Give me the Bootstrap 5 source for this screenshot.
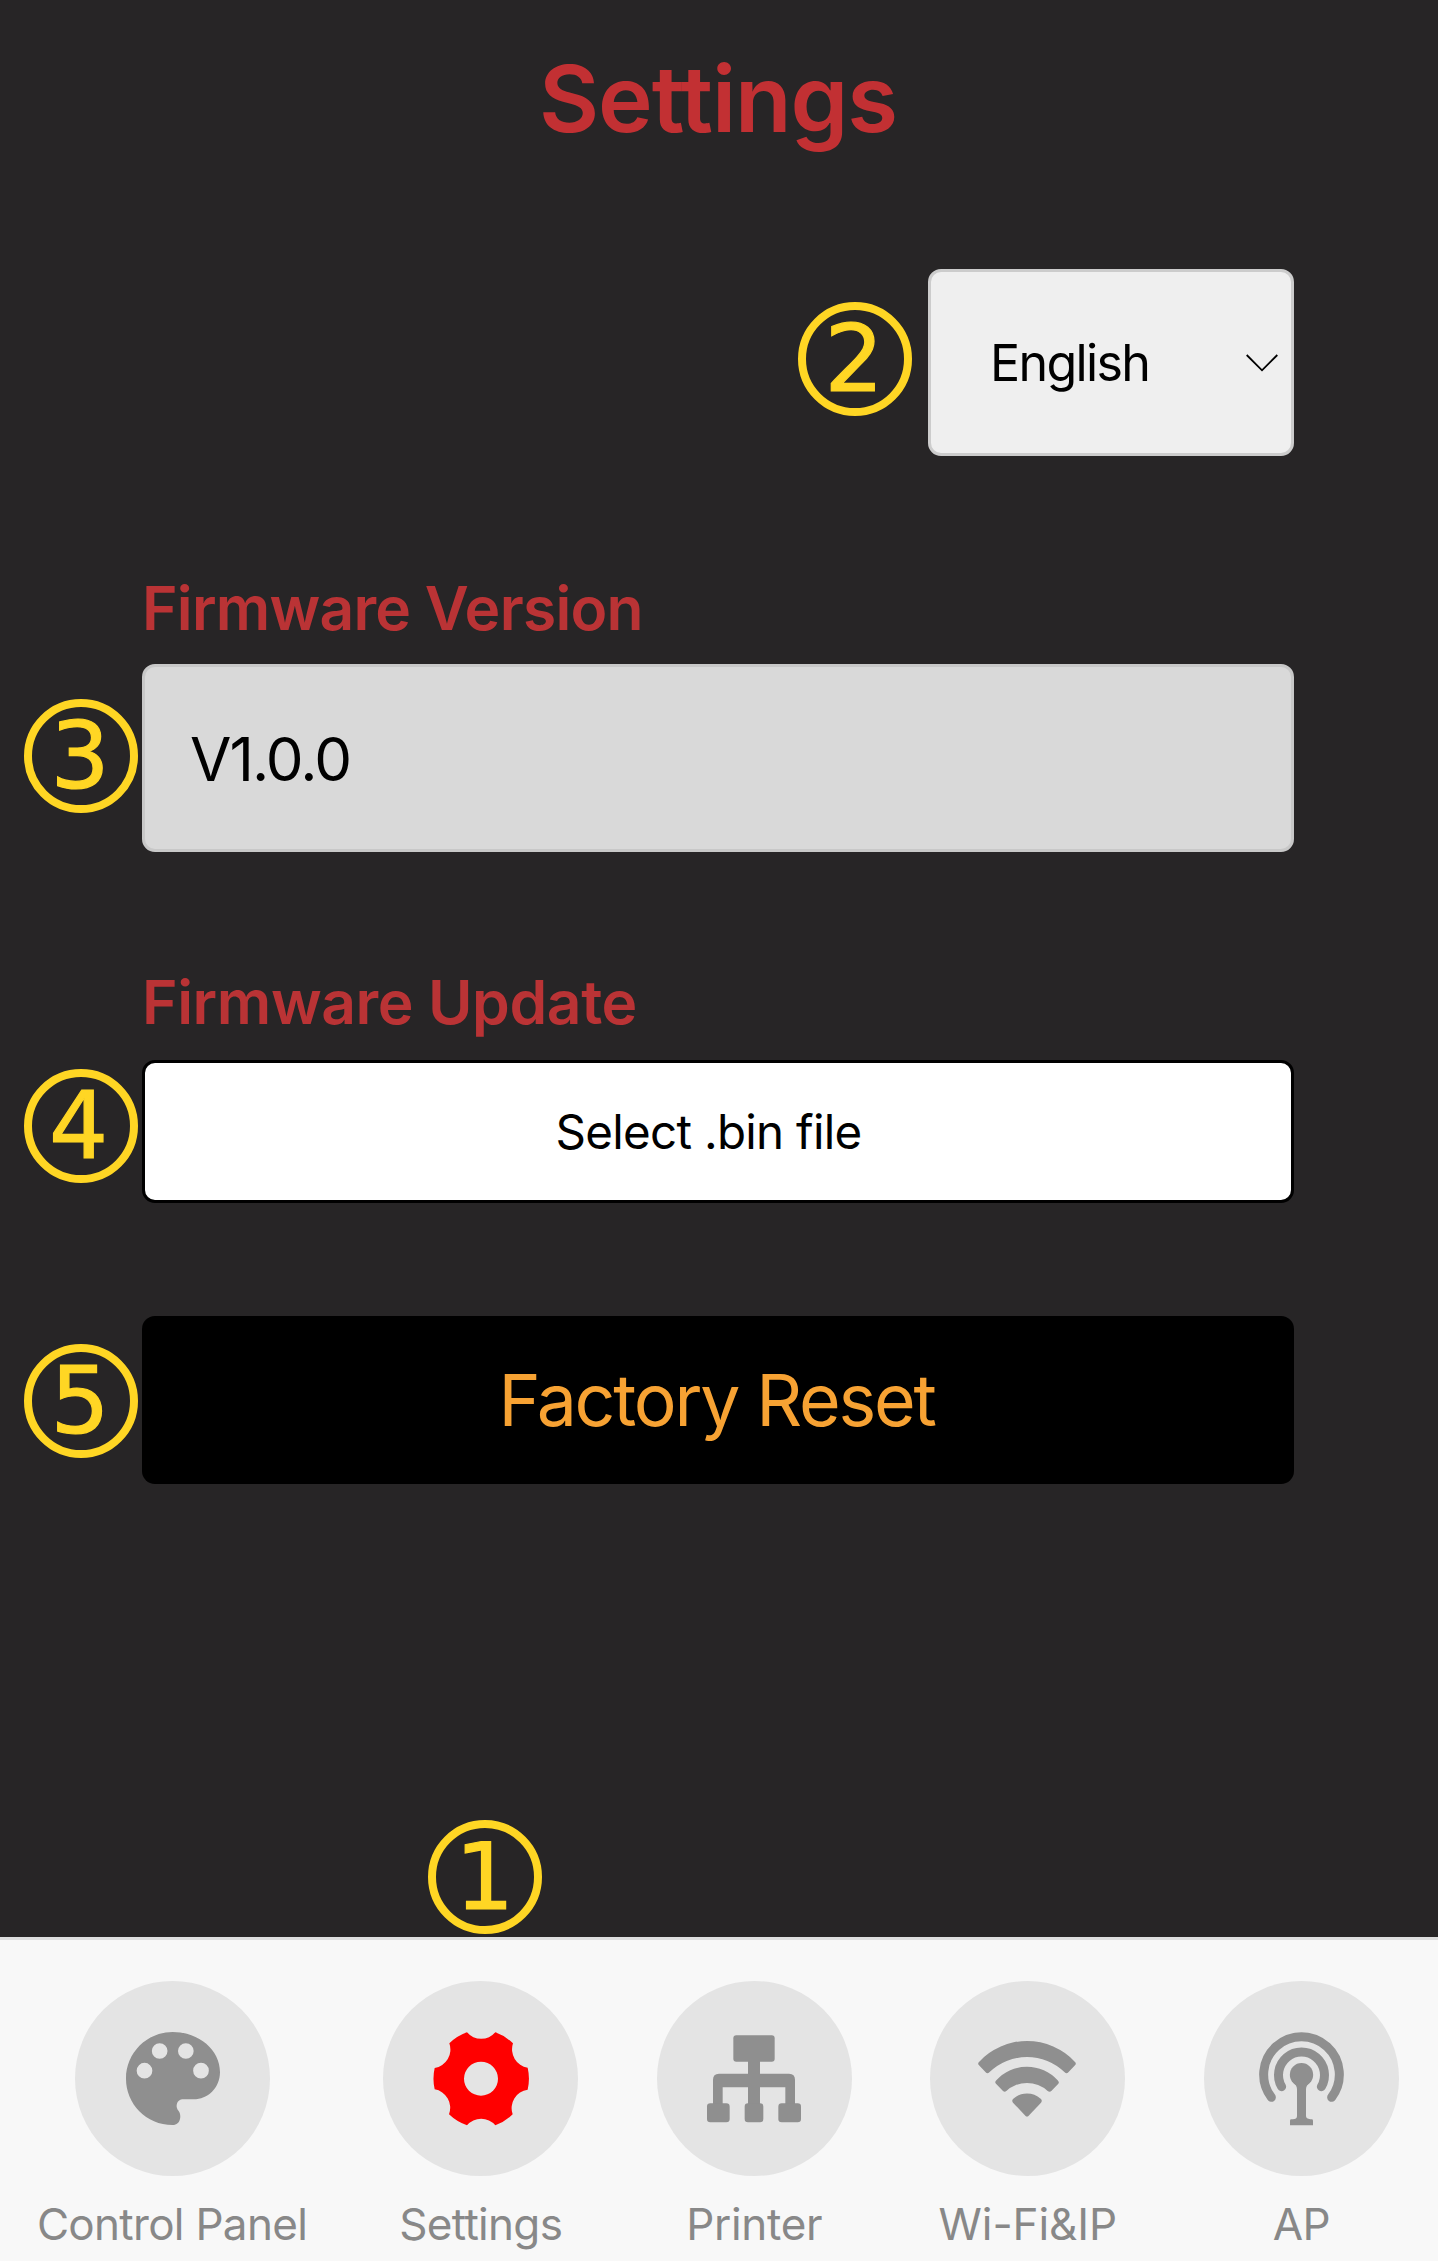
<!DOCTYPE html>
<html lang="en">
<head>
<meta charset="utf-8">
<meta name="viewport" content="width=device-width, initial-scale=1">
<title>Settings</title>
<link href="https://cdn.jsdelivr.net/npm/bootstrap@5.3.0/dist/css/bootstrap.min.css" rel="stylesheet">
<style>
  body { background: #272526; font-family: Inter, "Noto Sans", sans-serif; color: #000; line-height: 1; }
  .screen { height: 2261px; overflow: hidden; }
  .screen-main { padding: 0 144px 0 142px; }
  .page-title { height: 197px; font-size: 92.5px; font-weight: 600; letter-spacing: -1.1px; color: #c23033; }
  .lang-row { margin-top: 72px; }
  .lang-btn { width: 366px; height: 187px; padding: 2px 13px 0 59px; background: #efefef; border: 3px solid #ccc; border-radius: 13px; font-size: 50.2px; letter-spacing: -1.7px; color: #000; }
  .lang-btn svg { margin-top: -2px; }
  .field-label { height: 60px; font-size: 60.5px; font-weight: 600; color: #ba3335; white-space: nowrap; }
  .field-box { border-radius: 13px; border: 3px solid #000; color: #000; }
  .label-version { margin-top: 122px; letter-spacing: -.75px; }
  .version-box { margin-top: 26px; height: 188px; padding: 2px 0 0 45px; background: #d9d9d9; border-color: #c8c8c8; font-size: 60px; letter-spacing: -1.9px; }
  .label-update { margin-top: 120px; letter-spacing: -.4px; }
  .file-box { margin-top: 28px; height: 143px; background: #fff; padding-right: 19px; font-size: 47.5px; letter-spacing: -.7px; }
  .reset-box { margin-top: 112.5px; height: 168.5px; padding: 2px 3px 0 0; background: #000; color: #f7a233; font-size: 71.5px; letter-spacing: -2.2px; }
  /* numbered call-outs laid over the screen */
  .callout { position: absolute; width: 114px; height: 114px; border: 8px solid #ffd624; border-radius: 50%; color: #ffd624; font: 93px/98px "DejaVu Sans", sans-serif; letter-spacing: 0; -webkit-text-stroke: 1.2px #ffd624; text-align: center; padding-right: 2px; }
  .on-lang { left: -130px; top: 33px; }
  .on-version { left: -121px; top: 31.5px; }
  .on-update { left: -121px; top: 6px; padding-right: 5px; }
  .on-reset { left: -118px; top: 28px; }
  .on-tab { left: 83.5px; top: -120.500px; padding-right: 0; }
  .tabbar { position: relative; height: 324px; background: #f8f8f8; border-top: 3px solid #dedede; }
  .tab-item { flex: 1 1 0; position: relative; padding-top: 41px; color: #888; font-size: 44px; }
  .tab-first { flex: 0 0 344px; }
  .tab-item svg { width: 195px; height: 195px; border-radius: 50%; background: #e4e4e4; fill: #8f8f8f; flex: none; }
  .tab-text { height: 44px; margin-top: 26px; letter-spacing: -.7px; white-space: nowrap; line-height: 44px; }
  .spacing-tight { letter-spacing: -.3px; }
  .spacing-none { letter-spacing: -.1px; }
</style>
<script src="https://cdn.jsdelivr.net/npm/bootstrap@5.3.0/dist/js/bootstrap.bundle.min.js"></script>
</head>
<body>
<div class="screen d-flex flex-column">
  <main class="screen-main flex-grow-1">
    <h1 class="page-title d-flex align-items-center justify-content-center m-0">Settings</h1>

    <div class="lang-row d-flex justify-content-end">
      <div class="position-relative">
        <button type="button" class="lang-btn d-flex align-items-center justify-content-between">English
          <svg width="32" height="18" viewBox="0 0 32 18" fill="none" stroke="#000" stroke-width="1.8"><path d="M.7 1 16 16.3 31.3 1"/></svg>
        </button>
        <span class="callout on-lang">2</span>
      </div>
    </div>

    <div class="field-label label-version d-flex align-items-center">Firmware Version</div>
    <div class="field-box version-box position-relative d-flex align-items-center">V1.0.0
      <span class="callout on-version">3</span>
    </div>

    <div class="field-label label-update d-flex align-items-center">Firmware Update</div>
    <div class="field-box file-box position-relative d-flex align-items-center justify-content-center">Select .bin file
      <span class="callout on-update">4</span>
    </div>

    <div class="field-box reset-box border-0 position-relative d-flex align-items-center justify-content-center">Factory Reset
      <span class="callout on-reset">5</span>
    </div>
  </main>

  <nav class="tabbar d-flex flex-shrink-0">
    <div class="tab-item tab-first d-flex flex-column align-items-center">
      <svg viewBox="12 17 585 585"><path fill-rule="evenodd" d="M305 170C385 170 447 225 447 290C447 338 410 372 368 372H333C318 374 313 392 320 403C334 416 330 449 305 449C225 449 165 385 165 310C165 232 228 170 305 170ZM242.500 227a23.500 23.500 0 1 0 47 0a23.500 23.500 0 1 0-47 0ZM321 227a23.500 23.500 0 1 0 47 0a23.500 23.500 0 1 0-47 0ZM197 286a23.500 23.500 0 1 0 47 0a23.500 23.500 0 1 0-47 0ZM366.500 286a23.500 23.500 0 1 0 47 0a23.500 23.500 0 1 0-47 0Z"/></svg>
      <div class="tab-text">Control Panel</div>
    </div>
    <div class="tab-item d-flex flex-column align-items-center">
      <span class="callout on-tab">1</span>
      <svg viewBox="942 17 585 585"><path fill="#f00" fill-rule="evenodd" d="M1194 171A56 56 0 0 0 1279 171A145 145 0 0 1 1332 204A56 56 0 0 0 1376 277A145 145 0 0 1 1376 343A56 56 0 0 0 1331 417A145 145 0 0 1 1279 450A56 56 0 0 0 1194 450A145 145 0 0 1 1140 417A56 56 0 0 0 1097 342A145 145 0 0 1 1097 278A56 56 0 0 0 1141 204A145 145 0 0 1 1194 171ZM1185 310a51 51 0 1 0 102 0a51 51 0 1 0-102 0Z"/></svg>
      <div class="tab-text">Settings</div>
    </div>
    <div class="tab-item d-flex flex-column align-items-center">
      <svg viewBox="24 17 585 585"><rect x="253" y="180" width="124" height="79" rx="9"/><rect x="297" y="250" width="36" height="150"/><path d="M192 390V313Q192 295 210 295H420Q438 295 438 313V390H409V336H221V390Z"/><rect x="174" y="384" width="68" height="57" rx="10"/><rect x="287" y="384" width="56" height="57" rx="10"/><rect x="388" y="384" width="68" height="57" rx="10"/></svg>
      <div class="tab-text spacing-tight">Printer</div>
    </div>
    <div class="tab-item d-flex flex-column align-items-center">
      <svg viewBox="843 17 585 585"><path d="M990 260A196 196 0 0 1 1278 260Q1283 265 1278 270L1258 291Q1253 297 1247 291A162 162 0 0 0 1021 291Q1015 297 1010 291L990 270Q985 265 990 260Z"/><path d="M1042 315A124 124 0 0 1 1226 315Q1232 321 1228 325L1207 347Q1202 352 1196 347A92 92 0 0 0 1072 347Q1067 352 1062 347L1041 325Q1036 321 1042 315Z"/><path d="M1093 370A62 62 0 0 1 1175 370Q1181 376 1176 382L1139 421Q1134 426 1129 421L1092 382Q1087 376 1093 370Z"/></svg>
      <div class="tab-text spacing-none">Wi-Fi&amp;IP</div>
    </div>
    <div class="tab-item d-flex flex-column align-items-center">
      <svg viewBox="42 17 585 585"><g fill="none" stroke="#8f8f8f" stroke-width="27" stroke-linecap="round"><path d="M244 366A113.500 113.500 0 1 1 425 366"/><path d="M275 334A69 69 0 1 1 394 334"/></g><circle cx="334.500" cy="298" r="35"/><path d="M310 322Q321 330 321 342V422Q321 432 308 432H304Q300 432 300 436V450H369V436Q369 432 365 432H361Q348 430 348 422V342Q348 330 359 322Z"/></svg>
      <div class="tab-text">AP</div>
    </div>
  </nav>
</div>
</body>
</html>
